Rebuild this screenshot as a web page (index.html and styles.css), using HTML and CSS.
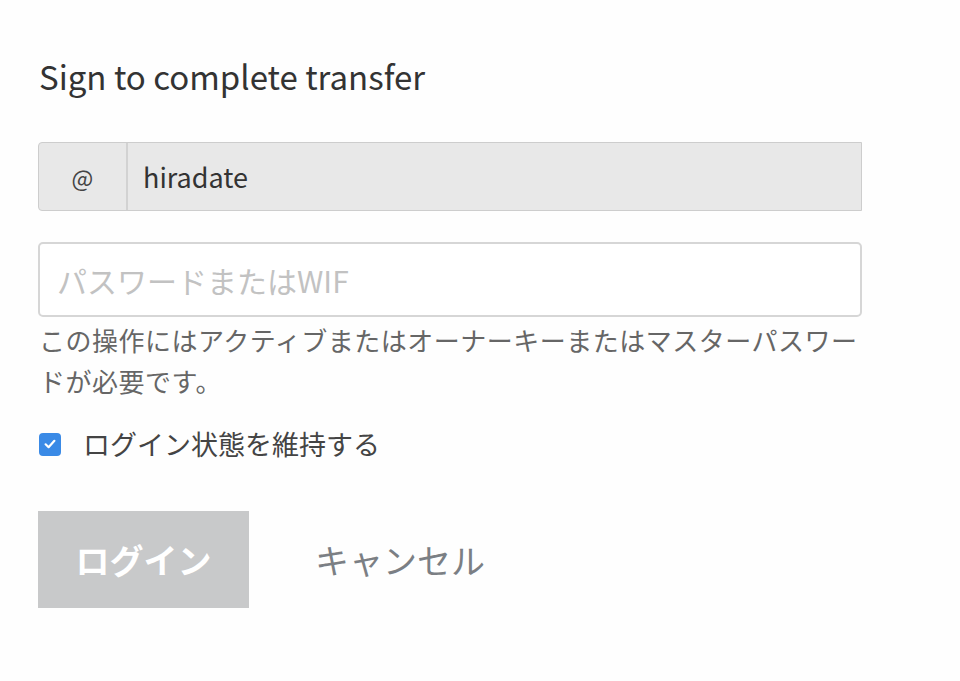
FILE: index.html
```html
<!DOCTYPE html>
<html lang="ja">
<head>
<meta charset="utf-8">
<link rel="stylesheet" href="styles.css">
</head>
<body>
<div class="page">
  <h1 class="title">Sign to complete transfer</h1>
  <div class="input-group">
    <span class="addon">@</span>
    <span class="account">hiradate</span>
  </div>
  <div class="password">
    <input type="password" class="pw-input" placeholder="パスワードまたはWIF">
  </div>
  <p class="help">この操作にはアクティブまたはオーナーキーまたはマスターパスワードが必要です。</p>
  <label class="remember">
    <span class="check">
      <svg width="16" height="16" viewBox="0 0 16 16"><path d="M3.6 8.3 L6.6 11.2 L12.4 4.8" fill="none" stroke="#fff" stroke-width="2.2" stroke-linecap="round" stroke-linejoin="round"/></svg>
    </span>
    <span class="remember-text">ログイン状態を維持する</span>
  </label>
  <div class="actions">
    <button class="login">ログイン</button>
    <button class="cancel">キャンセル</button>
  </div>
</div>
</body>
</html>
```
FILE: styles.css
```css
html, body {
  margin: 0;
  padding: 0;
  background: #fefefe;
}
body {
  font-family: "Noto Sans CJK JP", "Noto Sans", sans-serif;
  color: #333;
}
.page {
  width: 824px;
  padding: 52px 0 0 38px;
}
.title {
  margin: 0 0 0 1px;
  font-size: 33px;
  font-weight: 400;
  line-height: 48px;
  color: #333;
}
.input-group {
  margin-top: 42px;
  display: flex;
  height: 69px;
  box-sizing: border-box;
  border: 1px solid #cdcdcd;
  border-radius: 4px 0 0 4px;
  background: #e8e8e8;
}
.addon {
  width: 87px;
  border-right: 2px solid #d2d2d2;
  display: flex;
  align-items: center;
  justify-content: center;
  font-size: 23px;
  color: #444;
}
.account {
  display: flex;
  align-items: center;
  padding-left: 15px;
  font-size: 27px;
  color: #333;
}
.password {
  margin-top: 31px;
}
.pw-input {
  display: block;
  width: 100%;
  height: 75px;
  box-sizing: border-box;
  border: 2px solid #d6d6d6;
  border-radius: 5px;
  background: #fff;
  padding: 0 17px;
  font-family: inherit;
  font-size: 30px;
  outline: none;
}
.pw-input::placeholder {
  color: #c2c2c2;
}
.help {
  margin: 2px 0 0 1px;
  font-size: 26px;
  letter-spacing: 0.5px;
  line-height: 41px;
  color: #666;
}
.remember {
  margin-top: 25px;
  display: flex;
  align-items: center;
  gap: 22px;
  padding-left: 1px;
}
.check {
  width: 22px;
  height: 23px;
  border-radius: 4px;
  background: #3a8ae6;
  display: flex;
  align-items: center;
  justify-content: center;
}
.remember-text {
  font-size: 27px;
  line-height: 36px;
  color: #444;
}
.actions {
  margin-top: 49px;
  display: flex;
  align-items: center;
  gap: 66px;
}
.login {
  width: 211px;
  height: 97px;
  border: none;
  background: #c8c9ca;
  color: #fff;
  font-family: inherit;
  font-size: 34px;
  font-weight: 700;
  padding: 0;
}
.cancel {
  border: none;
  background: none;
  padding: 0;
  font-family: inherit;
  font-size: 34px;
  color: #7b7f84;
}
```
